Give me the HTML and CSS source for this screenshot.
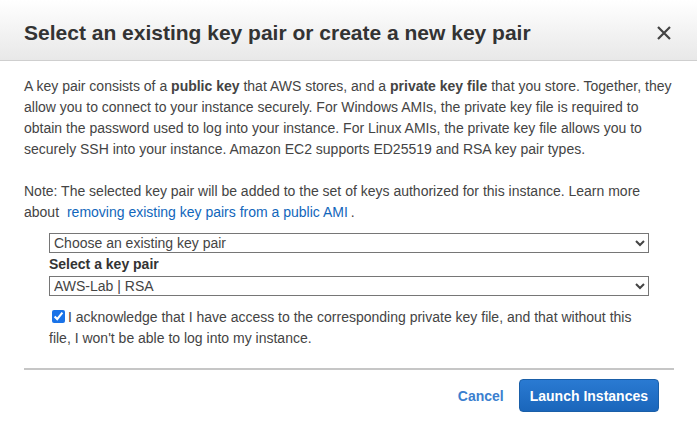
FILE: index.html
```html
<!DOCTYPE html>
<html lang="en">
<head>
  <meta charset="UTF-8">
  <title>Select key pair</title>
  <link rel="stylesheet" href="styles.css">
</head>
<body>

  <div class="modal">

    <!-- Cabecera -->
    <div class="modal-header">
      <h2>Select an existing key pair or create a new key pair</h2>
      <span class="cerrar">
        <svg width="16" height="16" viewBox="0 0 16 16"><path d="M2 2 L14 14 M14 2 L2 14" stroke="#444" stroke-width="2.2" fill="none"/></svg>
      </span>
    </div>

    <div class="modal-body">
      <p>A key pair consists of a <b>public key</b> that AWS stores, and a <b>private key file</b> that you store. Together, they allow you to connect to your instance securely. For Windows AMIs, the private key file is required to obtain the password used to log into your instance. For Linux AMIs, the private key file allows you to securely SSH into your instance. Amazon EC2 supports ED25519 and RSA key pair types.</p>

      <p class="nota">Note: The selected key pair will be added to the set of keys authorized for this instance. Learn more about <a href="#">removing existing key pairs from a public AMI</a>.</p>

      <div class="campos">
        <select>
          <option>Choose an existing key pair</option>
        </select>
        <label class="etiqueta">Select a key pair</label>
        <select>
          <option>AWS-Lab | RSA</option>
        </select>

        <label class="acepto">
          <input type="checkbox" checked>I acknowledge that I have access to the corresponding private key file, and that without this file, I won't be able to log into my instance.
        </label>
      </div>
    </div>

    <div class="modal-footer">
      <a href="#" class="cancelar">Cancel</a>
      <button class="lanzar">Launch Instances</button>
    </div>

  </div>

</body>
</html>
```

FILE: styles.css
```css
body {
  font-family: "Liberation Sans", Arial, sans-serif;
  background-color: #fff;
  margin: 0;
  color: #444;
}
.modal {
  width: 697px;
}
.modal-header {
  height: 61px;
  box-sizing: border-box;
  background: linear-gradient(#ffffff, #e8e8e8);
  border-bottom: 1px solid #cfcfcf;
  display: flex;
  align-items: center;
  justify-content: space-between;
  padding: 0 25px 0 24px;
}
.modal-header h2 {
  margin: 0;
  font-size: 21px;
  color: #333;
  padding-top: 6px;
}
.cerrar {
  display: flex;
  padding-top: 6px;
}
.modal-body {
  padding: 15px 24px 0 24px;
  font-size: 14px;
  line-height: 21px;
}
.modal-body p {
  margin: 0 0 21px 0;
}
.modal-body p.nota {
  margin-bottom: 10px;
}
.modal-body a {
  color: #1166bb;
  text-decoration: none;
  margin: 0 3px 0 4px;
}
.campos {
  padding-left: 25px;
}
.campos select {
  display: block;
  width: 600px;
  height: 20px;
  font-family: "Liberation Sans", Arial, sans-serif;
  font-size: 14px;
  color: #444;
  border: 1px solid #767676;
  border-radius: 0;
  background: #fff;
  padding: 0;
}
.etiqueta {
  display: block;
  font-weight: bold;
  color: #333;
  margin: 1px 0 1px;
}
.acepto {
  display: block;
  margin-top: 11px;
  width: 590px;
}
.acepto input {
  width: 13px;
  height: 13px;
  margin: 0 3px 0 3px;
  vertical-align: -1px;
  accent-color: #1a73e8;
}
.modal-footer {
  margin: 19px 23px 0 24px;
  border-top: 2px solid #c6c6c6;
  display: flex;
  justify-content: flex-end;
  align-items: center;
  padding: 9px 15px 0 0;
}
.cancelar {
  color: #3b7fcf;
  font-weight: bold;
  font-size: 14px;
  text-decoration: none;
  margin-right: 15px;
}
.lanzar {
  font-family: "Liberation Sans", Arial, sans-serif;
  font-size: 14px;
  font-weight: bold;
  color: #fff;
  background: linear-gradient(#2a7ad2, #1a66bb);
  border: 1px solid #1a5fa8;
  border-radius: 4px;
  height: 33px;
  padding: 0 10px;
  cursor: pointer;
}
```
